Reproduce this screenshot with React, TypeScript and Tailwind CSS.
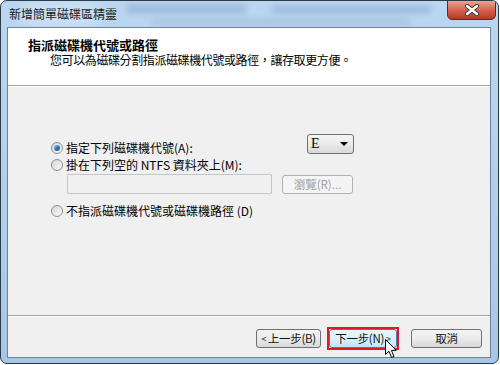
import React from "react";

const FONT = '"Noto Sans CJK TC", "Noto Sans", sans-serif';

function Radio({ checked }: { checked?: boolean }) {
  return (
    <div className="w-[12px] h-[12px] rounded-full border border-[#8a8c8e] bg-gradient-to-br from-[#d6d6d6] to-[#fbfbfb] flex items-center justify-center shrink-0">
      {checked && (
        <div className="w-[6px] h-[6px] rounded-full bg-gradient-to-br from-[#8fc4f0] via-[#2f78c8] to-[#1a4f96]" />
      )}
    </div>
  );
}

function Btn({ children, hover }: { children: React.ReactNode; hover?: boolean }) {
  return (
    <div
      className={
        "h-[19px] rounded-[3px] border flex items-center justify-center text-[11.5px] tracking-[-0.3px] leading-none text-[#111] " +
        (hover
          ? "border-[#3c7fb1] bg-gradient-to-b from-[#eaf6fd] via-[#d9f0fc] to-[#bee6fd] w-[68px]"
          : "border-[#707070] bg-gradient-to-b from-[#f4f4f4] via-[#ebebeb] to-[#d8d8d8]")
      }
    >
      {children}
    </div>
  );
}

export default function App() {
  return (
    <div className="w-[500px] h-[365px] bg-white" style={{ fontFamily: FONT }}>
      <div className="relative w-[499px] h-[364px] rounded-[7px] border border-[#2e3a48] overflow-hidden bg-gradient-to-b from-[#bad6f1] via-[#b2d0ee] to-[#a7c7e7] pl-[6px] pr-[7px] pb-[5px] flex flex-col">
        {/* blurred background behind glass */}
        <div className="absolute left-[125px] top-[4px] w-[120px] h-[8px] rounded-full bg-[#7d9bbb] opacity-50 blur-[3px]" />
        <div className="absolute left-[270px] top-[5px] w-[160px] h-[7px] rounded-full bg-[#7d9bbb] opacity-50 blur-[3px]" />
        <div className="absolute left-[150px] top-[18px] w-[260px] h-[6px] rounded-full bg-[#8aa6c4] opacity-40 blur-[3px]" />
        <div className="absolute left-[20px] top-[1px] w-[80px] h-[24px] rounded-full bg-[#d5e9fb] opacity-60 blur-[6px]" />

        {/* title bar */}
        <div className="relative h-[26px] flex items-center pl-[2px]">
          <span className="text-[12px] text-[#1a1a1a] leading-none">新增簡單磁碟區精靈</span>
        </div>

        {/* close button */}
        <div className="absolute left-[446px] top-[-1px] w-[49px] h-[20px] rounded-b-[5px] border border-[#5a2a24] bg-gradient-to-b from-[#e9a596] via-[#d4634f] to-[#b93626] flex items-center justify-center">
          <svg width="16" height="12" viewBox="0 0 16 12">
            <path d="M3 2 L13 10 M13 2 L3 10" stroke="#3a3a3a" strokeWidth="4.2" strokeLinecap="round" />
            <path d="M3 2 L13 10 M13 2 L3 10" stroke="#ffffff" strokeWidth="2.4" strokeLinecap="round" />
          </svg>
        </div>

        {/* content */}
        <div className="relative flex-1 flex flex-col border border-[#6f8398] bg-[#f0f0f0]">
          {/* header */}
          <div className="h-[57px] bg-white pt-[10px] pl-[20px]">
            <div className="text-[13px] font-bold leading-[14px] text-black">指派磁碟機代號或路徑</div>
            <div className="mt-[1px] text-[12px] leading-[14px] text-black pl-[22px] tracking-[-0.4px]">
              您可以為磁碟分割指派磁碟機代號或路徑，讓存取更方便。
            </div>
          </div>
          <div className="h-[1px] bg-[#a0a0a0]" />
          <div className="h-[1px] bg-white" />

          {/* body */}
          <div className="h-[228px] pt-[47px] pl-[43px] text-[12px] text-black">
            <div className="flex items-start">
              <div className="w-[256px] mt-[7px] h-[13px] flex items-center gap-[3px]">
                <Radio checked />
                <span className="leading-none">指定下列磁碟機代號(A):</span>
              </div>
              <div className="w-[47px] h-[20px] rounded-[3px] border border-[#707070] bg-gradient-to-b from-[#f4f4f4] via-[#ebebeb] to-[#d8d8d8] flex items-center justify-between pl-[3px] pr-[5px]">
                <span className="text-[14px] leading-none" style={{ fontFamily: '"Liberation Serif", serif' }}>E</span>
                <svg width="8" height="4" viewBox="0 0 8 4">
                  <path d="M0 0 L8 0 L4 4 Z" fill="#000" />
                </svg>
              </div>
            </div>
            <div className="mt-[5px] h-[12px] flex items-center gap-[3px]">
              <Radio />
              <span className="leading-none">掛在下列空的 NTFS 資料夾上(M):</span>
            </div>
            <div className="mt-[3px] pl-[16px] flex items-start gap-[10px]">
              <div className="w-[205px] h-[20px] border border-[#c4c6c8] bg-[#f0f0f0] rounded-[1px]" />
              <div className="mt-[1px] w-[71px] h-[19px] rounded-[3px] border border-[#adb2b5] bg-[#f4f4f4] flex items-center justify-center text-[11.5px] leading-none text-[#a0a0a0]">
                瀏覽(R)...
              </div>
            </div>
            <div className="mt-[11px] h-[12px] flex items-center gap-[3px]">
              <Radio />
              <span className="leading-none">不指派磁碟機代號或磁碟機路徑 (D)</span>
            </div>
          </div>

          <div className="h-[1px] bg-[#a0a0a0]" />
          <div className="h-[1px] bg-white" />

          {/* footer */}
          <div className="flex-1 flex items-start justify-end pr-[8px] pt-[10px]">
            <div className="mt-[2px] w-[65px]">
              <Btn>
                <span className="text-[9px] mr-[2px]">&lt;</span>上一步(B)
              </Btn>
            </div>
            <div className="ml-[6px] border-2 border-[#e4191f] p-0">
              <Btn hover>
                下一步(N)<span className="text-[9px] ml-[2px]">&gt;</span>
              </Btn>
            </div>
            <div className="ml-[12px] mt-[2px] w-[71px]">
              <Btn>取消</Btn>
            </div>
          </div>

          {/* mouse cursor */}
          <svg className="absolute left-[377px] top-[311px]" width="13" height="20" viewBox="0 0 13 20">
            <path d="M0.5 0.5 L0.5 15.5 L4 12.2 L6.6 18.5 L9 17.5 L6.4 11.4 L11.2 11.4 Z" fill="#fff" stroke="#000" strokeWidth="1" strokeLinejoin="round" />
          </svg>
        </div>
      </div>
    </div>
  );
}
